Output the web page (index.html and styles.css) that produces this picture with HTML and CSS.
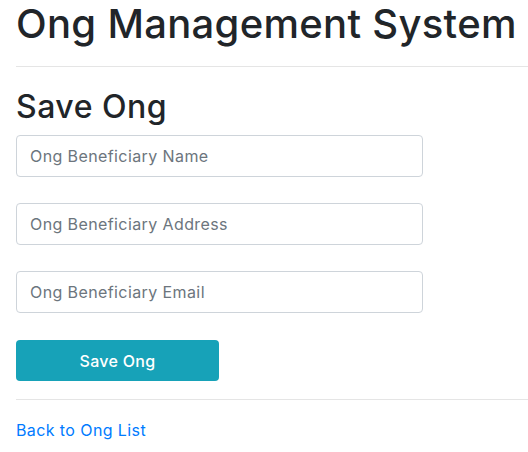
FILE: index.html
```html
<!DOCTYPE html>
<html lang="en">
<head>
<meta charset="utf-8">
<title>Ong Management System</title>
<link rel="stylesheet" href="styles.css">
</head>
<body>
<div class="container">
  <h1 class="title">Ong Management System</h1>
  <hr class="rule rule-top">
  <h2 class="subtitle">Save Ong</h2>
  <form class="form">
    <input class="field" type="text" placeholder="Ong Beneficiary Name">
    <input class="field" type="text" placeholder="Ong Beneficiary Address">
    <input class="field" type="email" placeholder="Ong Beneficiary Email">
    <button class="btn" type="button">Save Ong</button>
  </form>
  <hr class="rule rule-bottom">
  <a class="back" href="#">Back to Ong List</a>
</div>
</body>
</html>
```

FILE: styles.css
```css
* { box-sizing: border-box; }
html, body { margin: 0; padding: 0; background: #fff; }
body {
  font-family: Inter, "Noto Sans", sans-serif;
  color: #212529;
  font-size: 16px;
  line-height: 1.5;
  letter-spacing: 0.4px;
}
.container {
  padding: 0 0 0 16px;
}
.title {
  margin: 0;
  font-size: 40px;
  line-height: 48px;
  font-weight: 500;
  letter-spacing: 0.3px;
  white-space: nowrap;
}
.rule {
  border: 0;
  border-top: 1px solid rgba(0,0,0,0.1);
  margin: 0;
  height: 0;
}
.rule-top { margin-top: 18px; }
.subtitle {
  margin: 21px 0 9px;
  font-size: 32px;
  line-height: 38px;
  font-weight: 500;
  letter-spacing: 0.5px;
}
.form {
  display: flex;
  flex-direction: column;
  align-items: flex-start;
  gap: 26px;
}
.field {
  width: 407px;
  height: 42px;
  padding: 0 13px;
  border: 1px solid #ced4da;
  border-radius: 4px;
  font-family: inherit;
  font-size: 16px;
  letter-spacing: 0.4px;
  color: #495057;
  background: #fff;
}
.field::placeholder { color: #6c757d; }
.btn {
  margin-top: 1px;
  width: 203px;
  height: 41px;
  border: 0;
  border-radius: 4px;
  background: #17a2b8;
  color: #fff;
  font-family: inherit;
  font-size: 16px;
  font-weight: 500;
  letter-spacing: 0.3px;
}
.rule-bottom { margin-top: 18px; }
.back {
  display: block;
  margin-top: 18px;
  color: #007bff;
  text-decoration: none;
  line-height: 24px;
}
```
